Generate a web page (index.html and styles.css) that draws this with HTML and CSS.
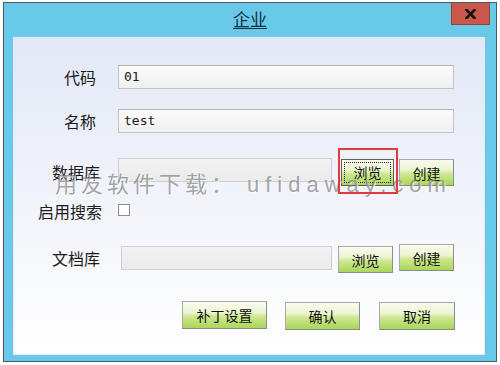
FILE: index.html
```html
<!doctype html>
<html lang="zh-CN">
  <head>
    <meta charset="UTF-8" />
    <meta name="viewport" content="width=device-width, initial-scale=1.0" />
    <title>企业</title>
    <link rel="stylesheet" href="styles.css">
  </head>
  <body>
    <div class="window">
      <div class="titlebar">
        <span class="title">企业</span>
        <div class="close">
          <svg width="11" height="10" viewBox="0 0 11 10">
            <path d="M1.5 1 L9.5 9 M9.5 1 L1.5 9" stroke="#111" stroke-width="2.6" stroke-linecap="square" />
          </svg>
        </div>
      </div>

      <div class="panel">
        <div class="field field-first">
          <label class="label label-short">代码</label>
          <div class="input input-wide">01</div>
        </div>

        <div class="field field-second">
          <label class="label label-short">名称</label>
          <div class="input input-wide">test</div>
        </div>

        <div class="field field-db">
          <label class="label">数据库</label>
          <div class="input input-path disabled"></div>
          <button class="btn btn-browse focused"><span>浏览</span></button>
          <button class="btn btn-create">创建</button>
        </div>

        <div class="field field-search">
          <label class="label label-long">启用搜索</label>
          <span class="checkbox"></span>
        </div>

        <div class="field field-doc">
          <label class="label">文档库</label>
          <div class="input input-doc disabled"></div>
          <button class="btn btn-browse-doc">浏览</button>
          <button class="btn btn-create-doc">创建</button>
        </div>

        <div class="actions">
          <button class="btn btn-patch">补丁设置</button>
          <button class="btn btn-ok">确认</button>
          <button class="btn btn-cancel">取消</button>
        </div>
      </div>

      <!-- overlays from the screenshot -->
      <div class="watermark"><span class="wm-cn">用友软件下载：</span><span class="wm-en">ufidaway.com</span></div>
      <div class="highlight"></div>
    </div>
  </body>
</html>
```

FILE: styles.css
```css
body {
  margin: 0;
  background: #ffffff;
  font-family: "Noto Sans CJK SC", "Liberation Sans", sans-serif;
}
.window {
  position: relative;
  margin: 2px 0 0 3px;
  width: 492px;
  height: 358px;
  border: 1px solid #4e5a63;
  background: #68c9e9;
  display: flex;
  flex-direction: column;
}
.titlebar {
  position: relative;
  height: 34px;
  display: flex;
  align-items: center;
  justify-content: center;
}
.title {
  font-size: 17px;
  line-height: 20px;
  color: #14303f;
  text-decoration: underline;
  text-underline-offset: 2px;
  margin-top: -2px;
}
.close {
  position: absolute;
  top: 0;
  right: 6px;
  width: 39px;
  height: 22px;
  background: #c9574c;
  border: 1px solid #9a4038;
  border-top: none;
  box-sizing: border-box;
  display: flex;
  align-items: center;
  justify-content: center;
}
.panel {
  flex: 1;
  margin: 0 11px 6px 9px;
  border: 1px solid #ebe6f6;
  background: linear-gradient(#e2e8f6, #f3f5fb 55%, #ffffff);
  display: flex;
  flex-direction: column;
}
.field {
  display: flex;
  align-items: center;
}
.field-first {
  margin-top: 27px;
  height: 24px;
}
.field-second {
  margin-top: 20px;
  height: 24px;
}
.field-db {
  margin-top: 25px;
  height: 28px;
  align-items: flex-start;
}
.field-search {
  margin-top: 15px;
  height: 20px;
}
.field-doc {
  margin-top: 23px;
  height: 28px;
  align-items: flex-start;
}
.label {
  width: 86px;
  flex: none;
  text-align: right;
  font-size: 16px;
  line-height: 28px;
  color: #1b1b1b;
}
.field-first .label,
.field-second .label {
  line-height: 24px;
}
.field-search .label {
  line-height: 20px;
}
.label-short {
  width: 82px;
  padding-right: 4px;
}
.label-long {
  width: 88px;
}
.input {
  box-sizing: border-box;
  height: 24px;
  margin-left: 18px;
  border: 1px solid #c4c4c4;
  border-top-color: #b4b4b4;
  background: linear-gradient(#fbfbfb, #f0f0f0);
  font-family: "DejaVu Sans Mono", "Liberation Mono", monospace;
  font-size: 13px;
  line-height: 22px;
  padding-left: 5px;
  color: #1a1a1a;
}
.input.disabled {
  background: linear-gradient(#f2f2f2, #ebebeb);
  border-color: #cfcfcf;
}
.input-wide {
  width: 336px;
}
.input-path {
  width: 214px;
}
.input-doc {
  width: 211px;
  margin-left: 21px;
  margin-top: 2px;
}
.checkbox {
  margin-left: 16px;
  width: 12px;
  height: 12px;
  box-sizing: border-box;
  border: 1px solid #8c8c8c;
  background: #ffffff;
  margin-top: -2px;
}
.btn {
  box-sizing: border-box;
  height: 27px;
  padding: 0;
  border: 1px solid #a9a9a9;
  border-right-color: #8e8e8e;
  border-bottom-color: #8a8a8a;
  background: linear-gradient(#f9fbee 0%, #edf5d2 40%, #cfe894 55%, #a9d657 100%);
  font-family: "Noto Sans CJK SC", sans-serif;
  font-size: 14px;
  color: #111111;
  cursor: pointer;
}
.btn:hover {
  background: linear-gradient(#fbfdf2 0%, #f1f8da 40%, #d8ee9f 55%, #b3dc66 100%);
}
.btn-browse {
  width: 53px;
  margin-left: 9px;
  margin-top: 1px;
}
.btn-create {
  width: 55px;
  margin-left: 5px;
  margin-top: 1px;
}
.btn.focused {
  border-color: #5f5f5f;
  padding: 2px;
}
.btn.focused span {
  display: block;
  height: 100%;
  border: 1px dotted #222;
  box-sizing: border-box;
  line-height: 19px;
}
.btn-browse-doc {
  width: 55px;
  margin-left: 6px;
  margin-top: 2px;
}
.btn-create-doc {
  width: 55px;
  margin-left: 6px;
}
.actions {
  display: flex;
  margin-top: 29px;
  padding-left: 168px;
}
.actions .btn {
  height: 28px;
}
.btn-patch {
  width: 85px;
}
.btn-ok {
  width: 75px;
  margin-left: 18px;
  margin-top: 1px;
}
.btn-cancel {
  width: 76px;
  margin-left: 19px;
  margin-top: 1px;
}
.watermark {
  position: absolute;
  left: 51px;
  top: 167px;
  font-size: 22px;
  line-height: 24px;
  color: rgba(110, 110, 110, 0.62);
  text-shadow: 1px 1px 0 rgba(255, 255, 255, 0.7);
  white-space: nowrap;
  pointer-events: none;
}
.wm-cn {
  letter-spacing: 4px;
}
.wm-en {
  font-family: "Liberation Sans", sans-serif;
  letter-spacing: 6px;
  margin-left: 10px;
}
.highlight {
  position: absolute;
  left: 334px;
  top: 145px;
  width: 60px;
  height: 46px;
  box-sizing: border-box;
  border: 2px solid #e13a3d;
  pointer-events: none;
}
```
